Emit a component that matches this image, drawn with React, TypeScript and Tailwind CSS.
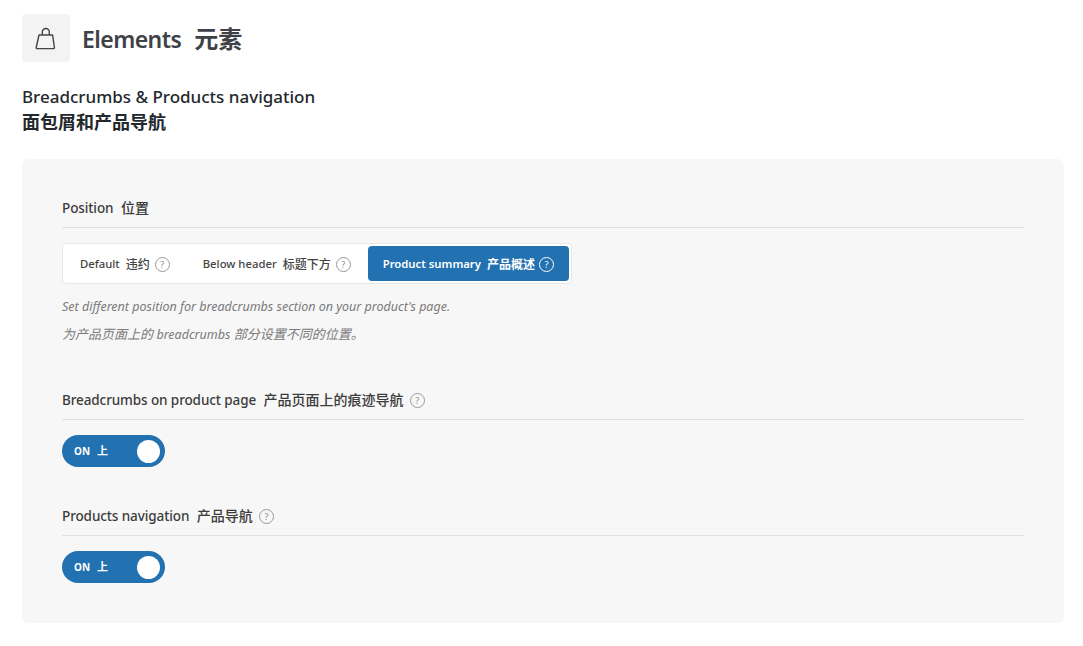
const FONT = "font-['Noto_Sans','Noto_Sans_CJK_SC',sans-serif]";

function Help({ light = false, gap = "ml-[5px]" }: { light?: boolean; gap?: string }) {
  return (
    <span
      className={`${gap} flex h-[15px] w-[15px] shrink-0 items-center justify-center rounded-full border text-[9px] font-normal leading-none ${
        light ? "border-white text-white" : "border-[#999] text-[#8c8c8c]"
      }`}
    >
      ?
    </span>
  );
}

function Heading({ en, zh, help = false }: { en: string; zh: string; help?: boolean }) {
  return (
    <div className="flex h-[29px] items-start border-b border-[#e1e1e1]">
      <span className="flex h-[18px] items-center text-[13.5px] font-medium leading-[18px] tracking-[-0.1px] text-[#3c3c3c]">
        {en}
        <span className="ml-[7.5px] text-[14px] tracking-normal">{zh}</span>
        {help && <Help gap="ml-[6px]" />}
      </span>
    </div>
  );
}

function Toggle() {
  return (
    <div className="mt-[15px] flex h-[32px] w-[103px] items-center justify-between rounded-full bg-[#2271b1] pl-[12px] pr-[5px]">
      <span className="pb-[2px] text-[10px] font-bold leading-none text-white">
        ON<span className="ml-[7px] text-[11px]">上</span>
      </span>
      <span className="h-[23px] w-[23px] rounded-full bg-white" />
    </div>
  );
}

export default function App() {
  return (
    <div className={`min-h-[646px] bg-white px-[22px] pt-[14px] ${FONT}`}>
      <div className="flex items-center">
        <div className="flex h-[48px] w-[48px] items-center justify-center rounded-[4px] bg-[#f3f3f3]">
          <svg width="22" height="24" viewBox="0 0 22 24" fill="none" stroke="#444" strokeWidth="1.4" strokeLinejoin="round">
            <path d="M4 9h13.6l1.8 12.5a1 1 0 0 1-1 1.1H2.2a1 1 0 0 1-1-1.1z" />
            <path d="M7.3 9V6a3.5 3.5 0 0 1 7 0v3" />
          </svg>
        </div>
        <h1 className="ml-[12px] pt-[2px] text-[23px] font-semibold leading-none tracking-[-0.55px] text-[#3e4246]">
          Elements<span className="ml-[13px] text-[24px] tracking-normal">元素</span>
        </h1>
      </div>

      <h2 className="mt-[22px] text-[17px] font-medium text-[#23282d]">
        <span className="block h-[26px] leading-[26px]">Breadcrumbs &amp; Products navigation</span>
        <span className="block h-[26px] text-[18px] font-semibold leading-[24px]">面包屑和产品导航</span>
      </h2>

      <div className="mt-[23px] h-[464px] w-[1042px] rounded-[6px] bg-[#f7f7f7] px-[40px] pt-[40px]">
        <Heading en="Position" zh="位置" />

        <div className="mt-[15px] flex h-[41px] w-[510px] items-center rounded-[4px] border border-[#e8e8e8] bg-white p-[2px] text-[11.3px] font-medium text-[#444]">
          <span className="flex h-[35px] items-center pl-[15px] pt-[2px]">
            Default<span className="ml-[6px] text-[12px]">违约</span>
            <Help />
          </span>
          <span className="ml-[33px] flex h-[35px] items-center pt-[2px]">
            Below header<span className="ml-[6px] text-[12px]">标题下方</span>
            <Help />
          </span>
          <span className="ml-[17px] flex h-[35px] flex-1 items-center rounded-[4px] bg-[#2271b1] pl-[15px] pt-[2px] font-semibold text-white">
            Product summary<span className="ml-[6px] text-[12px]">产品概述</span>
            <Help light gap="ml-[4px]" />
          </span>
        </div>

        <p className="mt-[14px] text-[12.5px] italic leading-[18px] text-[#7a7a7a]">
          Set different position for breadcrumbs section on your product's page.
        </p>
        <p className="mt-[9px] text-[13px] italic leading-[18px] text-[#7a7a7a]">
          为产品页面上的 <span className="text-[12.5px]">breadcrumbs</span> 部分设置不同的位置。
        </p>

        <div className="mt-[47px]">
          <Heading en="Breadcrumbs on product page" zh="产品页面上的痕迹导航" help />
          <Toggle />
        </div>

        <div className="mt-[40px]">
          <Heading en="Products navigation" zh="产品导航" help />
          <Toggle />
        </div>
      </div>
    </div>
  );
}
